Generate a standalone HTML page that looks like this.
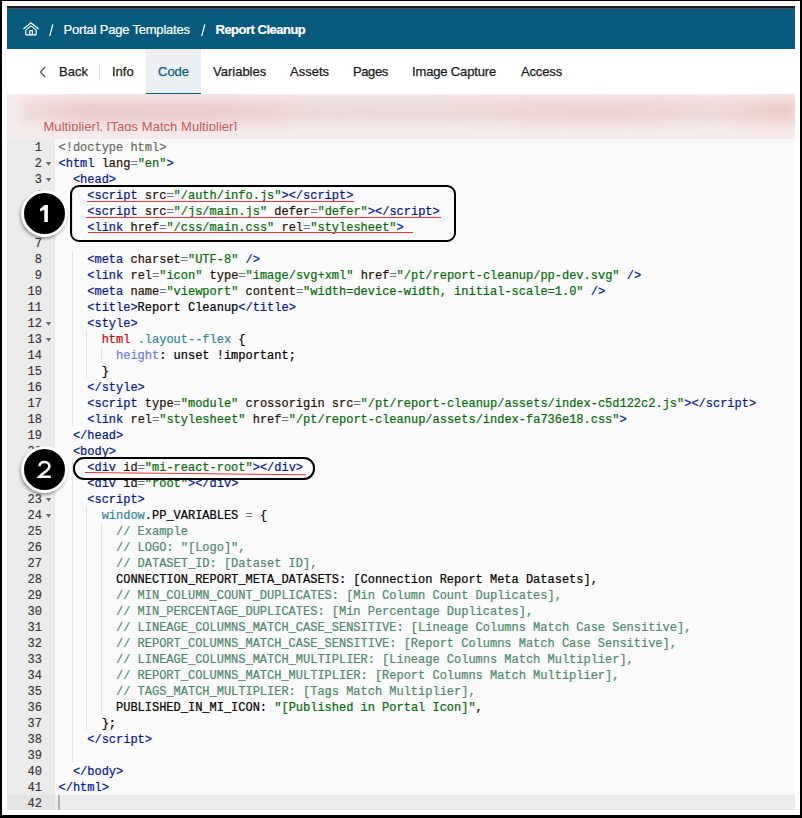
<!DOCTYPE html>
<html><head><meta charset="utf-8">
<style>
html,body{margin:0;padding:0;}
body{width:802px;height:818px;position:relative;overflow:hidden;background:#000;font-family:"Liberation Sans",sans-serif;}
.abs{position:absolute;}
#frame{position:absolute;left:2px;top:1px;width:798px;height:814px;background:#fff;}
#app{position:absolute;left:7px;top:6px;width:788px;height:804px;overflow:hidden;background:#fafafa;}
#topline{position:absolute;left:7px;top:6px;width:788px;height:3px;background:linear-gradient(#1c1a24 0,#1e1c26 2px,#524d58 2px,#524d58 3px);}
#header{position:absolute;left:7px;top:9px;width:788px;height:40px;background:#085a7c;}
.hd{position:absolute;color:#fff;-webkit-text-stroke:0.2px #fff;font-size:13px;white-space:pre;line-height:16px;}
#tabs{position:absolute;left:7px;top:49px;width:788px;height:45px;background:#fff;}
.tb{position:absolute;color:#1a1a1a;-webkit-text-stroke:0.25px currentColor;font-size:13px;white-space:pre;line-height:16px;top:64px;}
#acttab{position:absolute;left:146px;top:49px;width:55px;height:45px;background:#ebf0f5;}
#actline{position:absolute;left:146px;top:92.5px;width:55px;height:1.5px;background:#0b5b7e;}
#sep{position:absolute;left:99px;top:64px;width:1px;height:16px;background:#e3e3e3;}
#err{position:absolute;left:7px;top:94px;width:788px;height:45px;background:#f6ebeb;overflow:hidden;}
#errtxt{position:absolute;left:43px;top:0;height:131px;overflow:hidden;}
#gutter{position:absolute;left:7px;top:139px;width:48px;height:671px;background:#ebebeb;}
.gl{}
#gnums{position:absolute;left:7px;top:140px;-webkit-text-stroke:0.15px #333;width:35px;font-family:"Liberation Mono",monospace;font-size:12px;line-height:16px;color:#333;text-align:right;}
#gnums div{height:16px;}
#code{position:absolute;left:58.5px;top:140px;margin:0;letter-spacing:-0.01px;-webkit-text-stroke:0.2px currentColor;font-family:"Liberation Mono",monospace;font-size:12px;line-height:16px;color:#000;white-space:pre;}
#code i{font-style:normal;}
i.t{color:rgb(0,22,142);} i.a{color:#1e0f04;} i.o{color:rgb(104,118,135);} i.s{color:rgb(3,106,7);}
i.p{color:rgb(104,104,91);} i.c{color:rgb(76,136,107);} i.v{color:rgb(49,132,149);} i.k{color:rgb(197,6,11);} i.y{color:rgb(109,121,222);}
#actline42{position:absolute;left:55px;top:795px;width:740px;height:15px;background:#ececec;}
#gact42{position:absolute;left:7px;top:795px;width:48px;height:15px;background:#e4e4e4;}
#cursor{position:absolute;left:58px;top:795px;width:2px;height:15px;background:#b0b0b0;}
.fw{position:absolute;left:45.8px;width:0;height:0;border-left:2.7px solid transparent;border-right:2.7px solid transparent;border-top:3.6px solid #666;}
.ig{position:absolute;width:1px;background:repeating-linear-gradient(#c8c8c8 0,#c8c8c8 1px,transparent 1px,transparent 2px);}
.box{position:absolute;border:2.5px solid #000;box-sizing:border-box;}
.ul{position:absolute;height:1.5px;background:#e53935;}
.circ{position:absolute;width:41px;height:41px;border-radius:50%;background:#000;border:3px solid #fff;box-shadow:-1px 2px 3px rgba(0,0,0,0.35);color:#fff;font-weight:bold;font-size:23px;text-align:center;line-height:41px;}
</style></head><body>
<div id="frame"></div>
<div id="app"></div>
<div id="topline"></div>
<div id="header"></div>
<svg class="abs" style="left:23px;top:22px" width="16" height="14" viewBox="0 0 16 14" fill="none" stroke="#fff" stroke-width="1.2" stroke-linejoin="round" stroke-linecap="round">
<path d="M0.7 6.7 L8 0.8 L15.3 6.7"/>
<path d="M2.8 8.1 L8 3.9 L13.2 8.1 V12.3 Q13.2 12.9 12.6 12.9 H3.4 Q2.8 12.9 2.8 12.3 Z"/>
<path d="M6.7 12.9 V8.7 H9.4 V12.9"/>
</svg>
<svg class="abs" style="left:47px;top:22px" width="10" height="16"><line x1="5.7" y1="2.9" x2="2.8" y2="13.6" stroke="#fff" stroke-width="1.25" stroke-linecap="round"/></svg>
<div class="hd" style="left:63.5px;top:22px;letter-spacing:-0.2px">Portal Page Templates</div>
<svg class="abs" style="left:199px;top:22px" width="10" height="16"><line x1="5.7" y1="2.9" x2="2.8" y2="13.6" stroke="#fff" stroke-width="1.25" stroke-linecap="round"/></svg>
<div class="hd" style="left:215.5px;top:22px;font-weight:bold;letter-spacing:-0.5px">Report Cleanup</div>
<div id="tabs"></div>
<div id="acttab"></div>
<div id="actline"></div>
<svg class="abs" style="left:39px;top:66px" width="8" height="12" viewBox="0 0 8 12" fill="none" stroke="#555" stroke-width="1.3"><path d="M6 1 L1.5 6 L6 11"/></svg>
<div class="tb" style="left:59px">Back</div>
<div id="sep"></div>
<div class="tb" style="left:112px">Info</div>
<div class="tb" style="left:158px;color:#0b5b7e">Code</div>
<div class="tb" style="left:213px">Variables</div>
<div class="tb" style="left:290px">Assets</div>
<div class="tb" style="left:353px;letter-spacing:-0.4px">Pages</div>
<div class="tb" style="left:412px;letter-spacing:-0.15px">Image Capture</div>
<div class="tb" style="left:521px;letter-spacing:-0.15px">Access</div>
<div id="err">
 <div class="abs" style="left:14px;top:5px;width:776px;height:24px;filter:blur(6px);background:linear-gradient(90deg,rgba(220,170,170,0.2) 0,rgba(220,165,165,0.45) 60px,rgba(220,170,170,0.45) 200px,rgba(220,175,175,0.28) 300px,rgba(220,175,175,0.3) 420px,rgba(220,170,170,0.38) 580px,rgba(220,175,175,0.3) 700px,rgba(225,165,145,0.5) 788px)"></div>
 <div class="abs" style="left:36.5px;top:24px;height:13px;overflow:hidden;color:#c65656;font-size:13px;line-height:16px;white-space:pre;letter-spacing:0.04px"><div style="position:relative;top:0.5px">Multiplier], [Tags Match Multiplier]</div></div>
</div>
<div id="gutter"></div>
<div id="gact42"></div>
<div id="actline42"></div>
<div id="gnums"><div class="gl">1</div><div class="gl">2</div><div class="gl">3</div><div class="gl">4</div><div class="gl">5</div><div class="gl">6</div><div class="gl">7</div><div class="gl">8</div><div class="gl">9</div><div class="gl">10</div><div class="gl">11</div><div class="gl">12</div><div class="gl">13</div><div class="gl">14</div><div class="gl">15</div><div class="gl">16</div><div class="gl">17</div><div class="gl">18</div><div class="gl">19</div><div class="gl">20</div><div class="gl">21</div><div class="gl">22</div><div class="gl">23</div><div class="gl">24</div><div class="gl">25</div><div class="gl">26</div><div class="gl">27</div><div class="gl">28</div><div class="gl">29</div><div class="gl">30</div><div class="gl">31</div><div class="gl">32</div><div class="gl">33</div><div class="gl">34</div><div class="gl">35</div><div class="gl">36</div><div class="gl">37</div><div class="gl">38</div><div class="gl">39</div><div class="gl">40</div><div class="gl">41</div><div class="gl act">42</div></div>
<svg class="abs" style="left:0;top:0" width="802" height="818"><polygon fill="#666" points="45.9,162 51.3,162 48.6,165.4"/><polygon fill="#666" points="45.9,178 51.3,178 48.6,181.4"/><polygon fill="#666" points="45.9,322 51.3,322 48.6,325.4"/><polygon fill="#666" points="45.9,338 51.3,338 48.6,341.4"/><polygon fill="#666" points="45.9,498 51.3,498 48.6,501.4"/><polygon fill="#666" points="45.9,514 51.3,514 48.6,517.4"/></svg>
<div class="ig" style="left:72px;top:187px;height:48px"></div><div class="ig" style="left:72px;top:251px;height:176px"></div><div class="ig" style="left:72px;top:459px;height:304px"></div><div class="ig" style="left:86px;top:331px;height:48px"></div><div class="ig" style="left:86px;top:507px;height:224px"></div><div class="ig" style="left:101px;top:347px;height:16px"></div><div class="ig" style="left:101px;top:523px;height:192px"></div>
<pre id="code"><i class="p">&lt;!doctype html&gt;</i>
<i class="t">&lt;html</i> <i class="a">lang</i><i class="o">=</i><i class="s">&quot;en&quot;</i><i class="t">&gt;</i>
  <i class="t">&lt;head&gt;</i>
    <i class="t">&lt;script</i> <i class="a">src</i><i class="o">=</i><i class="s">&quot;/auth/info.js&quot;</i><i class="t">&gt;&lt;/script&gt;</i>
    <i class="t">&lt;script</i> <i class="a">src</i><i class="o">=</i><i class="s">&quot;/js/main.js&quot;</i> <i class="a">defer</i><i class="o">=</i><i class="s">&quot;defer&quot;</i><i class="t">&gt;&lt;/script&gt;</i>
    <i class="t">&lt;link</i> <i class="a">href</i><i class="o">=</i><i class="s">&quot;/css/main.css&quot;</i> <i class="a">rel</i><i class="o">=</i><i class="s">&quot;stylesheet&quot;</i><i class="t">&gt;</i>

    <i class="t">&lt;meta</i> <i class="a">charset</i><i class="o">=</i><i class="s">&quot;UTF-8&quot;</i> <i class="t">/&gt;</i>
    <i class="t">&lt;link</i> <i class="a">rel</i><i class="o">=</i><i class="s">&quot;icon&quot;</i> <i class="a">type</i><i class="o">=</i><i class="s">&quot;image/svg+xml&quot;</i> <i class="a">href</i><i class="o">=</i><i class="s">&quot;/pt/report-cleanup/pp-dev.svg&quot;</i> <i class="t">/&gt;</i>
    <i class="t">&lt;meta</i> <i class="a">name</i><i class="o">=</i><i class="s">&quot;viewport&quot;</i> <i class="a">content</i><i class="o">=</i><i class="s">&quot;width=device-width, initial-scale=1.0&quot;</i> <i class="t">/&gt;</i>
    <i class="t">&lt;title&gt;</i>Report Cleanup<i class="t">&lt;/title&gt;</i>
    <i class="t">&lt;style&gt;</i>
      <i class="k">html</i> <i class="v">.layout--flex</i> {
        <i class="y">height</i>: unset !important;
      }
    <i class="t">&lt;/style&gt;</i>
    <i class="t">&lt;script</i> <i class="a">type</i><i class="o">=</i><i class="s">&quot;module&quot;</i> <i class="a">crossorigin</i> <i class="a">src</i><i class="o">=</i><i class="s">&quot;/pt/report-cleanup/assets/index-c5d122c2.js&quot;</i><i class="t">&gt;&lt;/script&gt;</i>
    <i class="t">&lt;link</i> <i class="a">rel</i><i class="o">=</i><i class="s">&quot;stylesheet&quot;</i> <i class="a">href</i><i class="o">=</i><i class="s">&quot;/pt/report-cleanup/assets/index-fa736e18.css&quot;</i><i class="t">&gt;</i>
  <i class="t">&lt;/head&gt;</i>
  <i class="t">&lt;body&gt;</i>
    <i class="t">&lt;div</i> <i class="a">id</i><i class="o">=</i><i class="s">&quot;mi-react-root&quot;</i><i class="t">&gt;&lt;/div&gt;</i>
    <i class="t">&lt;div</i> <i class="a">id</i><i class="o">=</i><i class="s">&quot;root&quot;</i><i class="t">&gt;&lt;/div&gt;</i>
    <i class="t">&lt;script&gt;</i>
      <i class="v">window</i>.PP_VARIABLES <i class="o">=</i> {
        <i class="c">// Example</i>
        <i class="c">// LOGO: &quot;[Logo]&quot;,</i>
        <i class="c">// DATASET_ID: [Dataset ID],</i>
        CONNECTION_REPORT_META_DATASETS: [Connection Report Meta Datasets],
        <i class="c">// MIN_COLUMN_COUNT_DUPLICATES: [Min Column Count Duplicates],</i>
        <i class="c">// MIN_PERCENTAGE_DUPLICATES: [Min Percentage Duplicates],</i>
        <i class="c">// LINEAGE_COLUMNS_MATCH_CASE_SENSITIVE: [Lineage Columns Match Case Sensitive],</i>
        <i class="c">// REPORT_COLUMNS_MATCH_CASE_SENSITIVE: [Report Columns Match Case Sensitive],</i>
        <i class="c">// LINEAGE_COLUMNS_MATCH_MULTIPLIER: [Lineage Columns Match Multiplier],</i>
        <i class="c">// REPORT_COLUMNS_MATCH_MULTIPLIER: [Report Columns Match Multiplier],</i>
        <i class="c">// TAGS_MATCH_MULTIPLIER: [Tags Match Multiplier],</i>
        PUBLISHED_IN_MI_ICON: <i class="s">&quot;[Published in Portal Icon]&quot;</i>,
      };
    <i class="t">&lt;/script&gt;</i>

  <i class="t">&lt;/body&gt;</i>
<i class="t">&lt;/html&gt;</i>
</pre>
<div id="cursor"></div>
<div class="box" style="left:70px;top:185px;width:386px;height:57px;border-radius:9px"></div>
<div class="ul" style="left:87px;top:200.8px;width:267px;height:1.3px"></div>
<div class="ul" style="left:86px;top:216.7px;width:355px;height:1.3px"></div>
<div class="ul" style="left:88px;top:232px;width:325px;height:1.3px"></div>
<div class="circ" style="left:21px;top:190px"></div>
<svg class="abs" style="left:0;top:0" width="802" height="818"><path fill="#fff" d="M40.1 208.7 L44.8 205 L47.9 205 L47.9 222 L44.3 222 L44.3 209.8 L40.6 211.5 Q39.6 210.2 40.1 208.7 Z"/></svg>
<div class="box" style="left:73px;top:457px;width:242px;height:23px;border-radius:11px"></div>
<div class="ul" style="left:85px;top:472.3px;width:221px;height:1.3px;transform:rotate(0.6deg);transform-origin:left"></div>
<div class="circ" style="left:21px;top:446px"></div>
<svg class="abs" style="left:0;top:0" width="802" height="818"><path fill="none" stroke="#fff" stroke-width="2.5" d="M39.6 466.3 C39.7 463.4 41.8 462 44.5 462 C47.4 462 49.4 463.8 49.4 466.3 C49.4 468.4 48.1 469.7 46 471.3 C42.5 474 40.8 475.3 39.4 476.7 L50.8 476.7"/></svg>
</body></html>
